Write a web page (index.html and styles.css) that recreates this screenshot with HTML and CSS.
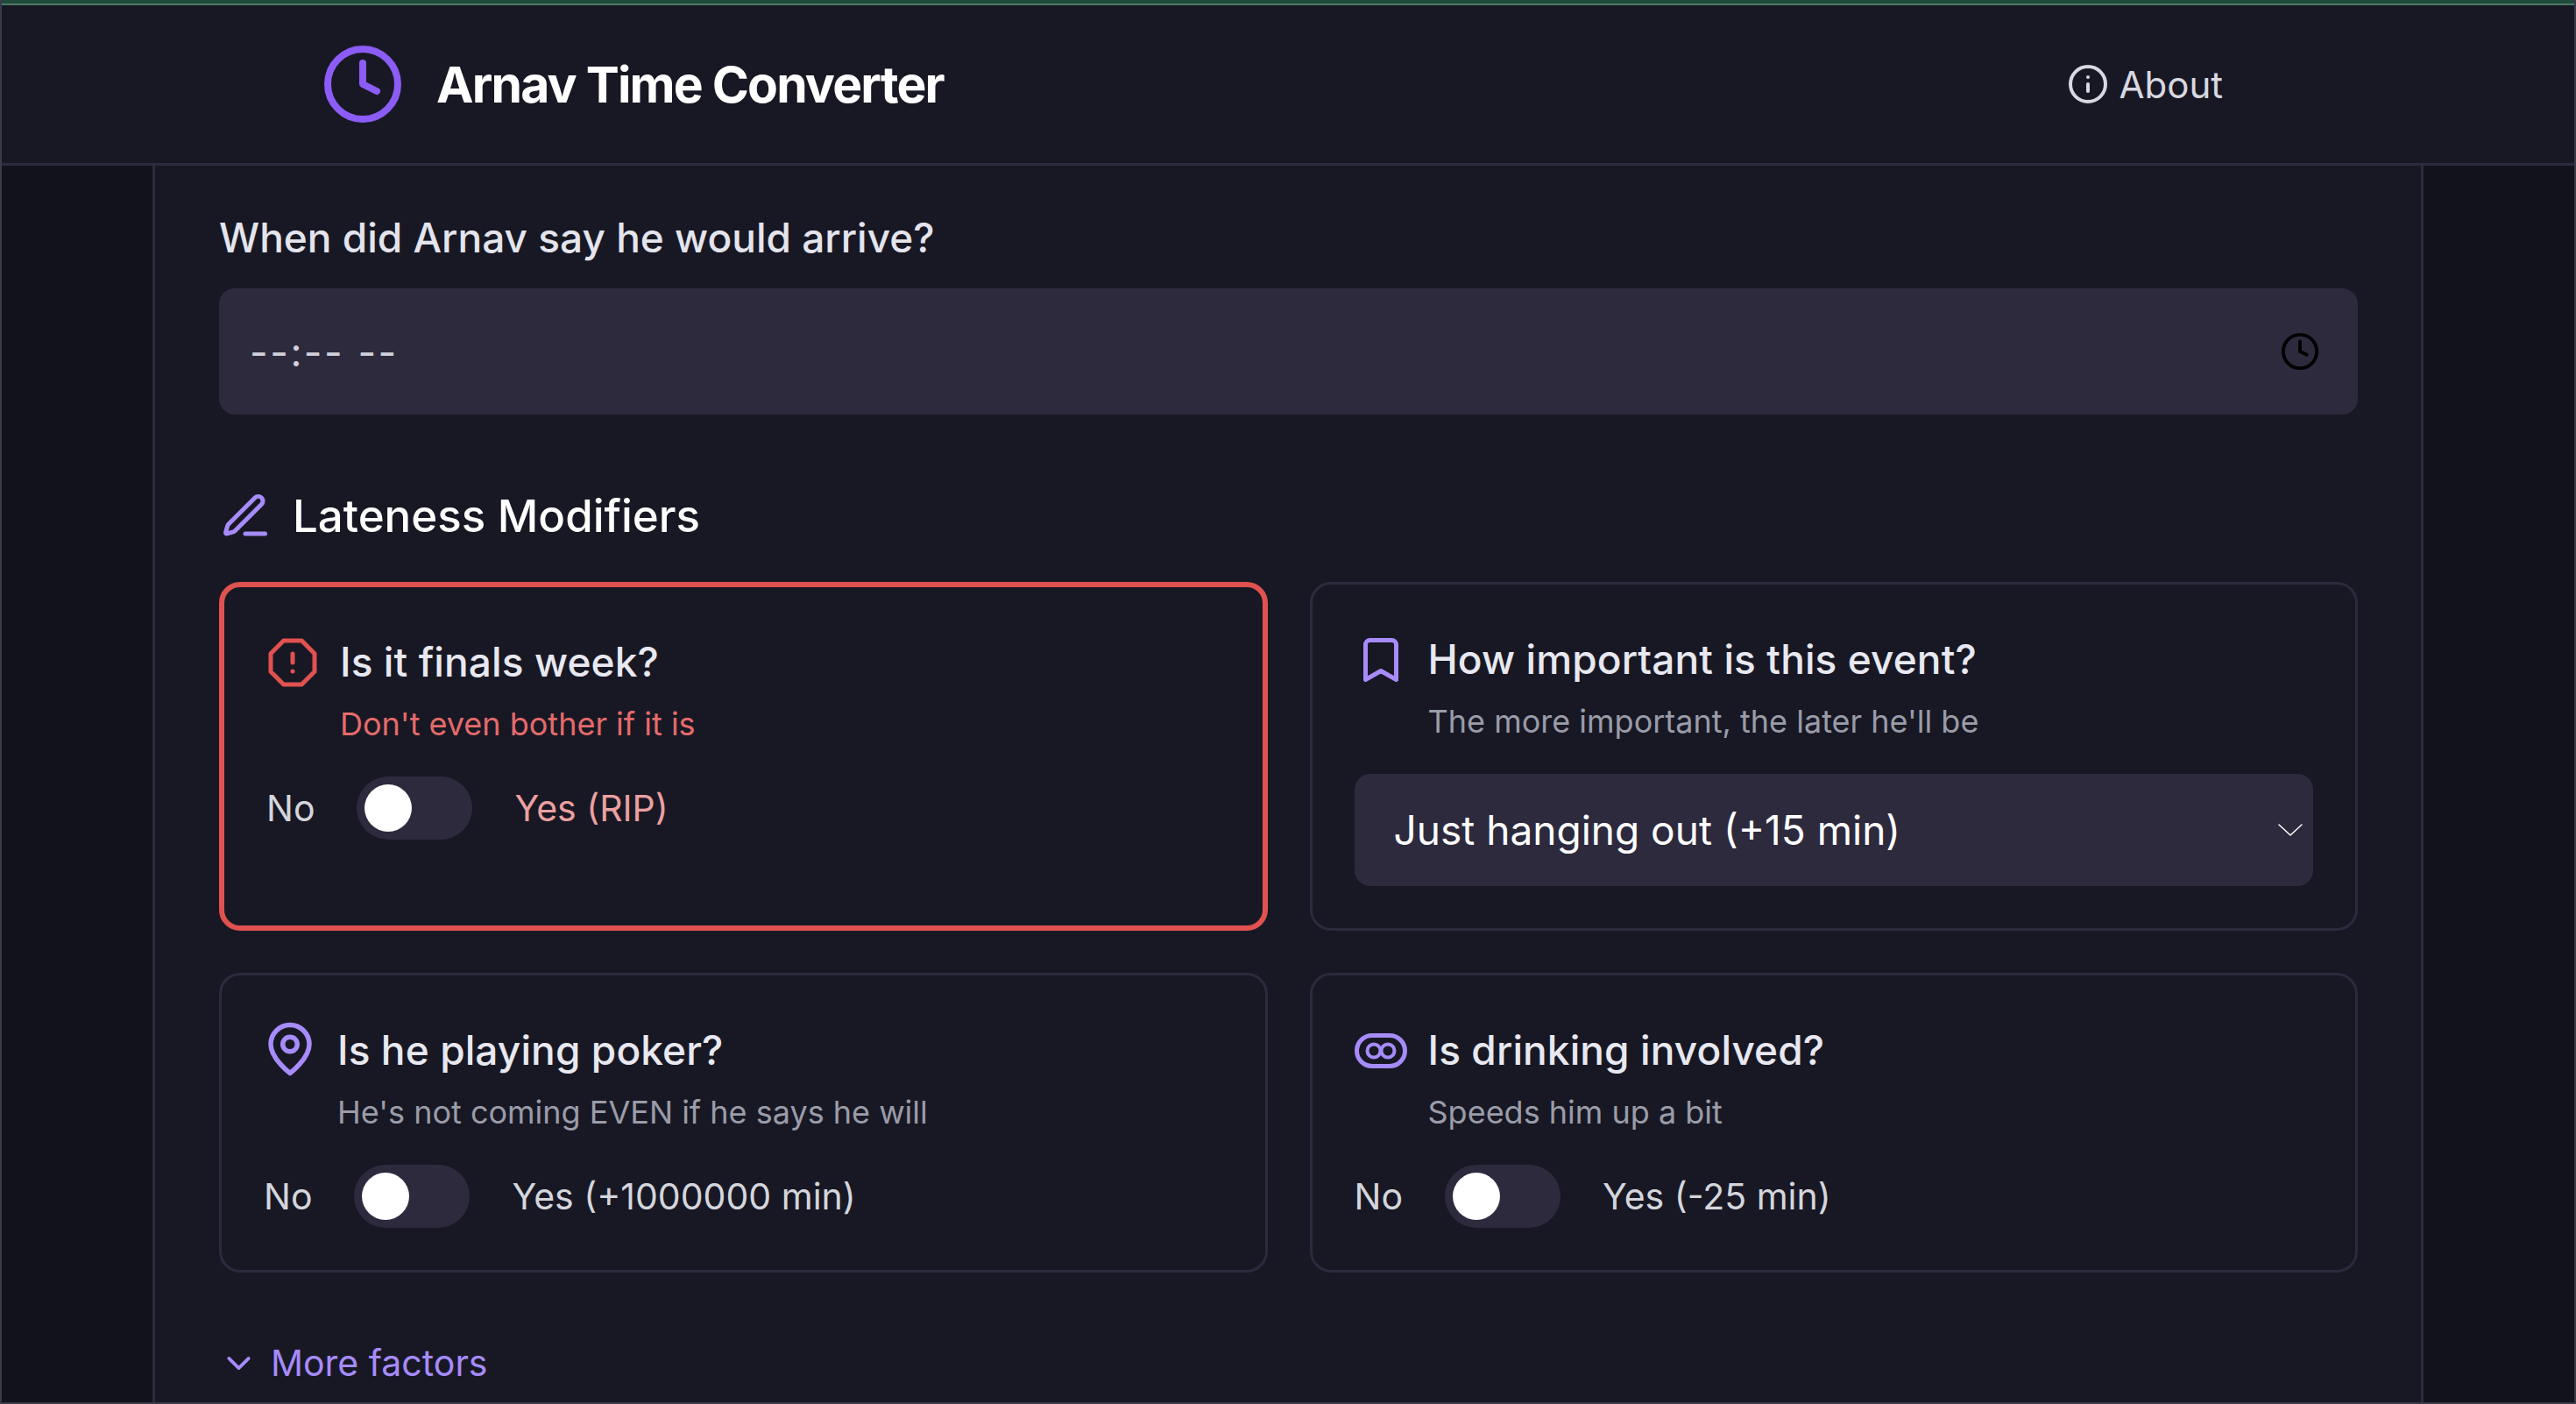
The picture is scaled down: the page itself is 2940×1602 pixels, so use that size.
FILE: index.html
```html
<!DOCTYPE html>
<html lang="en">
<head>
<meta charset="utf-8">
<title>Arnav Time Converter</title>
<link rel="stylesheet" href="styles.css">
</head>
<body>
<div class="window">
  <div class="topline"></div>
  <header class="header">
    <div class="brand">
      <svg class="logo" viewBox="0 0 24 24"><circle cx="12" cy="12" r="10"/><path d="M12 6v6l4 2"/></svg>
      <h1 class="brand-name">Arnav Time Converter</h1>
    </div>
    <a class="about">
      <svg class="about-icon" viewBox="0 0 24 24"><circle cx="12" cy="12" r="10"/><path d="M12 16v-4"/><path d="M12 8h.01"/></svg>
      <span>About</span>
    </a>
  </header>
  <main class="main">
    <label class="field-label">When did Arnav say he would arrive?</label>
    <div class="time-input">
      <span class="time-value">--:-- --</span>
      <svg class="time-icon" viewBox="0 0 24 24"><circle cx="12" cy="12" r="10"/><path d="M12 6v6l4 2"/></svg>
    </div>
    <h2 class="section-title">
      <svg class="icon" viewBox="0 0 24 24"><path d="M12 20h9"/><path d="M16.376 3.622a1 1 0 0 1 3.002 3.002L7.368 18.635a2 2 0 0 1-.855.506l-2.872.838a.5.5 0 0 1-.62-.62l.838-2.872a2 2 0 0 1 .506-.854z"/></svg>
      <span>Lateness Modifiers</span>
    </h2>
    <div class="grid">
      <section class="card card-alert">
        <div class="card-head">
          <svg class="icon icon-alert" viewBox="0 0 24 24"><path d="M7.86 2h8.28L22 7.86v8.28L16.14 22H7.86L2 16.14V7.86z"/><path d="M12 8v4"/><path d="M12 16h.01"/></svg>
          <h3 class="card-title">Is it finals week?</h3>
        </div>
        <p class="card-desc desc-alert">Don't even bother if it is</p>
        <div class="switch-row">
          <span class="switch-label">No</span>
          <span class="switch"><span class="knob"></span></span>
          <span class="switch-label label-alert">Yes (RIP)</span>
        </div>
      </section>
      <section class="card">
        <div class="card-head">
          <svg class="icon" viewBox="0 0 24 24"><path d="m19 21-7-4-7 4V5a2 2 0 0 1 2-2h10a2 2 0 0 1 2 2v16z"/></svg>
          <h3 class="card-title">How important is this event?</h3>
        </div>
        <p class="card-desc">The more important, the later he'll be</p>
        <div class="select">
          <span>Just hanging out (+15 min)</span>
          <svg class="select-arrow" viewBox="0 0 28 14"><path d="M1 1l13 12L27 1"/></svg>
        </div>
      </section>
      <section class="card">
        <div class="card-head">
          <svg class="icon icon-pin" viewBox="0 0 24 24"><path d="M20 10c0 6-8 12-8 12s-8-6-8-12a8 8 0 0 1 16 0Z"/><circle cx="12" cy="10" r="3"/></svg>
          <h3 class="card-title">Is he playing poker?</h3>
        </div>
        <p class="card-desc">He's not coming EVEN if he says he will</p>
        <div class="switch-row">
          <span class="switch-label">No</span>
          <span class="switch"><span class="knob"></span></span>
          <span class="switch-label">Yes (+1000000 min)</span>
        </div>
      </section>
      <section class="card">
        <div class="card-head">
          <svg class="icon" viewBox="0 0 24 24"><rect x="1" y="5" width="22" height="14" rx="7"/><circle class="ring" cx="8.8" cy="12" r="3"/><circle class="ring" cx="15.2" cy="12" r="3"/></svg>
          <h3 class="card-title">Is drinking involved?</h3>
        </div>
        <p class="card-desc">Speeds him up a bit</p>
        <div class="switch-row">
          <span class="switch-label">No</span>
          <span class="switch"><span class="knob"></span></span>
          <span class="switch-label">Yes (-25 min)</span>
        </div>
      </section>
    </div>
    <button class="more">
      <svg class="more-icon" viewBox="0 0 24 24"><path d="m6 9 6 6 6-6"/></svg>
      <span>More factors</span>
    </button>
  </main>
</div>
</body>
</html>
```
FILE: styles.css
```css
* { box-sizing: border-box; }
html, body { margin: 0; padding: 0; height: 100%; }
body {
  background: #12121a;
  font-family: Inter, "Liberation Sans", sans-serif;
  overflow: hidden;
}
svg { fill: none; stroke: currentColor; stroke-width: 2; stroke-linecap: round; stroke-linejoin: round; flex: none; }
.window {
  height: 1602px;
  border-left: 2px solid #3a3a48;
  border-right: 2px solid #3a3a48;
  border-bottom: 2px solid #3a3a48;
  overflow: hidden;
  display: flex;
  flex-direction: column;
}
.topline {
  height: 6px;
  margin: 0 -2px;
  flex: none;
  background: #214a3a;
  border-bottom: 2px solid #4d7a68;
}
.header {
  flex: none;
  height: 183px;
  background: #181824;
  border-bottom: 3px solid #2d2a3e;
  display: flex;
  align-items: center;
  justify-content: space-between;
  padding: 0 401px 0 364px;
}
.brand { display: flex; align-items: center; gap: 36px; }
.logo { width: 96px; height: 96px; color: #8b5cf6; }
.brand-name { margin: 0; font-size: 57px; font-weight: 700; letter-spacing: -1.8px; color: #fff; }
.about { display: flex; align-items: center; gap: 12px; color: #d8d8e0; font-size: 42px; }
.about-icon { width: 48px; height: 48px; }
.main {
  flex: 1;
  width: 2592px;
  margin: 0 auto;
  background: #181824;
  border-left: 3px solid #2d2a3e;
  border-right: 3px solid #2d2a3e;
  padding: 52px 72px 0 73px;
}
.field-label { display: block; font-size: 46px; line-height: 60px; font-weight: 500; color: #e4e4ec; margin-bottom: 28px; }
.time-input {
  height: 144px;
  border-radius: 18px;
  background: #2d2a3e;
  display: flex;
  align-items: center;
  justify-content: space-between;
  padding: 0 43px 0 35px;
  color: #d0d0da;
  font-size: 45px;
}
.time-value { letter-spacing: 2.5px; }
.time-icon { width: 46px; height: 46px; color: #000; }
.section-title {
  margin: 81px 0 40px;
  display: flex;
  align-items: center;
  gap: 24px;
  font-size: 51px;
  line-height: 70px;
  font-weight: 500;
  color: #fff;
}
.icon { width: 60px; height: 60px; color: #a78bfa; }
.grid { display: grid; grid-template-columns: 1fr 1fr; gap: 48px; }
.card { border: 3px solid #2d2a3e; border-radius: 24px; padding: 48px; }
.card-alert { border: 6px solid #e0524f; }
.card-head { display: flex; align-items: center; gap: 24px; }
.card-title { margin: 0; font-size: 46px; line-height: 75px; font-weight: 500; letter-spacing: 0.1px; color: #e8e8f0; }
.icon-alert { color: #e0524f; }
.icon-pin { width: 66px; height: 66px; margin: -7px -3px -3px; }
.ring { stroke-width: 1.6; }
.card-desc { margin: 8px 0 35px 84px; font-size: 36px; line-height: 50px; color: #9a9ca8; }
.desc-alert { color: #e56b6b; }
.switch-row { display: flex; align-items: center; gap: 48px; height: 72px; }
.switch-label { font-size: 41px; color: #d4d6dc; }
.label-alert { color: #eba0a0; }
.switch { width: 132px; height: 72px; border-radius: 36px; background: #2d2a3e; display: flex; align-items: center; padding-left: 9px; }
.knob { width: 54px; height: 54px; border-radius: 50%; background: #fff; }
.select {
  height: 128px;
  border-radius: 18px;
  background: #2d2a3e;
  display: flex;
  align-items: center;
  justify-content: space-between;
  padding: 0 12px 0 45px;
  font-size: 46px;
  color: #fff;
}
.select-arrow { width: 28px; height: 14px; stroke-width: 1.5; }
.more {
  margin-top: 78px;
  padding: 0;
  background: none;
  border: none;
  display: flex;
  align-items: center;
  gap: 14px;
  font: inherit;
  font-size: 41px;
  line-height: 50px;
  color: #a78bfa;
}
.more-icon { width: 45px; height: 45px; }
```
